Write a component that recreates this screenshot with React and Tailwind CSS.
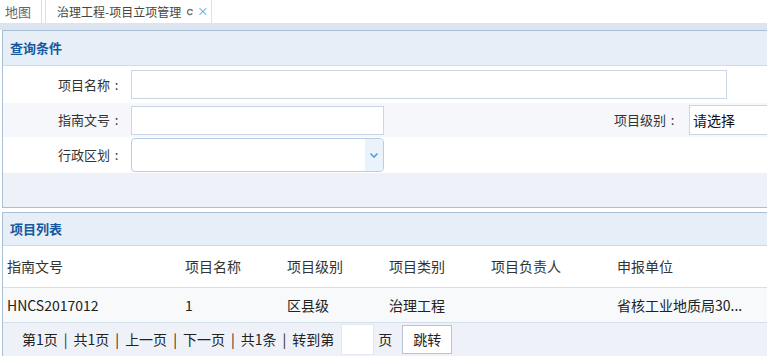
import React from 'react';

const font = { fontFamily: '"Noto Sans CJK SC", "Noto Sans", sans-serif' };

const Label = ({ children, className = '' }) => (
    <div className={`flex justify-end text-[13px] text-[#333] shrink-0 ${className}`}>
        <span>{children}</span>
        <span className="w-[13px] text-center">:</span>
    </div>
);

const Sep = () => <span className="mx-[6px]">|</span>;

const App = () => {
    const cols = ['指南文号', '项目名称', '项目级别', '项目类别', '项目负责人', '申报单位'];
    const row = ['HNCS2017012', '1', '区县级', '治理工程', '', '省核工业地质局30...'];

    return (
        <div className="w-[767px] h-[356px] overflow-hidden bg-white" style={font}>
            {/* Tabs */}
            <div className="flex h-[23px] items-stretch bg-white">
                <div className="w-[42px] border-r border-[#dcdcdc] flex items-center pl-[5px] text-[13px] text-[#666]">地图</div>
                <div className="ml-[3px] w-[167px] border-l border-r border-[#e0e0e0] flex items-center pl-[11px] text-[12px] text-[#444]">
                    <span>治理工程-项目立项管理</span>
                    <svg width="8" height="8" viewBox="0 0 10 10" className="ml-[5px]">
                        <path d="M7.6 3.2A3.2 3.2 0 1 0 7.8 6.6" fill="none" stroke="#777" strokeWidth="1.8" />
                        <path d="M6.2 1.6L8.6 2.2L8 4.6Z" fill="#777" />
                    </svg>
                    <span className="ml-[3px] text-[11px] text-[#6b8fc6] leading-none">×</span>
                </div>
            </div>
            <div className="h-[7px] bg-[#dce5ef]" />

            {/* 查询条件 */}
            <div className="ml-[2px] w-[800px] border border-[#a9bfd6]">
                <div className="h-[35px] bg-[#e6eef8] border-b border-[#cfdbe9] flex items-center pl-[7px] text-[13px] font-bold text-[#15599f]">查询条件</div>
                <div className="h-[37px] flex items-center bg-white">
                    <Label className="w-[120px]">项目名称</Label>
                    <div className="ml-[8px] w-[596px] h-[29px] border border-[#c9d6e5] bg-white" />
                </div>
                <div className="h-[34px] flex items-center bg-[#f5f7fa]">
                    <Label className="w-[120px]">指南文号</Label>
                    <div className="ml-[8px] w-[253px] h-[29px] border border-[#c9d6e5] bg-white" />
                    <Label className="ml-[230px] w-[65px]">项目级别</Label>
                    <div className="ml-[10px] w-[100px] h-[30px] border border-[#c9d6e5] bg-white flex items-center pl-[3px] text-[14px] text-[#111]">请选择</div>
                </div>
                <div className="h-[36px] flex items-center bg-white">
                    <Label className="w-[120px]">行政区划</Label>
                    <div className="ml-[8px] w-[253px] h-[34px] border border-[#b7cce6] rounded-[4px] bg-white flex justify-end overflow-hidden">
                        <div className="w-[18px] bg-[#eaf2fc] flex items-center justify-center">
                            <svg width="10" height="7" viewBox="0 0 10 7">
                                <path d="M1.5 1.5L5 5L8.5 1.5" fill="none" stroke="#5b9be0" strokeWidth="1.6" />
                            </svg>
                        </div>
                    </div>
                </div>
                <div className="h-[34px] bg-[#eef2f8]" />
            </div>

            {/* 项目列表 */}
            <div className="ml-[2px] mt-[4px] w-[800px] border-l border-t border-[#a9bfd6]">
                <div className="h-[33px] bg-[#e6eef8] border-b border-[#cfdbe9] flex items-center pl-[7px] text-[13px] font-bold text-[#15599f]">项目列表</div>
                <div className="h-[42px] grid grid-cols-[182px_102px_102px_102px_126px_1fr] items-center border-b border-[#d3dfeb] text-[14px] text-[#333]">
                    {cols.map((c, i) => (
                        <div key={c} className={i === 0 ? 'pl-[4px]' : ''}>{c}</div>
                    ))}
                </div>
                <div className="h-[35px] grid grid-cols-[182px_102px_102px_102px_126px_1fr] items-center bg-[#f7f9fb] border-b border-[#d3dfeb] text-[14px] text-[#222]">
                    {row.map((c, i) => (
                        <div key={i} className={i === 0 ? 'pl-[4px]' : ''}>{c}</div>
                    ))}
                </div>
                <div className="h-[40px] bg-[#eef2f8] flex items-start pt-[1px] pl-[19px] text-[14px] text-[#222]">
                    <div className="h-[31px] flex items-center">
                        第1页<Sep />共1页<Sep />上一页<Sep />下一页<Sep />共1条<Sep />转到第
                    </div>
                    <div className="ml-[7px] w-[33px] h-[31px] bg-white border border-[#e3e9f0]" />
                    <div className="ml-[4px] h-[31px] flex items-center">页</div>
                    <div className="ml-[10px] mt-[1px] w-[50px] h-[29px] bg-white border border-[#b8c4d0] flex items-center justify-center">跳转</div>
                </div>
            </div>
        </div>
    );
};

export default App;
